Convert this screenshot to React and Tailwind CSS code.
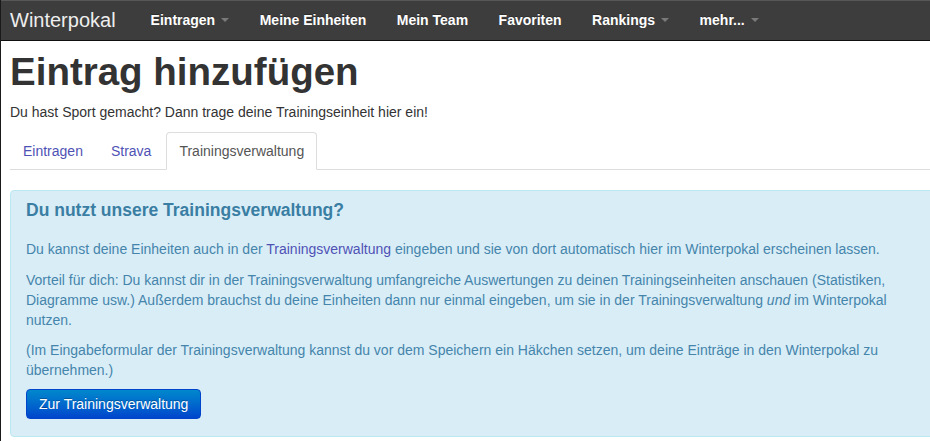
import React from 'react';

const navItems = [
  { label: 'Eintragen', caret: true },
  { label: 'Meine Einheiten' },
  { label: 'Mein Team' },
  { label: 'Favoriten' },
  { label: 'Rankings', caret: true },
  { label: 'mehr...', caret: true },
];

function Caret() {
  return (
    <span className="inline-block w-0 h-0 ml-[6px] mt-[8px] align-top border-t-4 border-x-4 border-x-transparent border-t-[#7a7a7a]" />
  );
}

function Navbar() {
  return (
    <nav className="h-[41px] bg-[#3d3d3d] border-t border-t-[#575757] border-b border-b-[#0f0f0f] flex">
      <a href="#" className="pl-[9px] pr-5 pt-[9px] text-[20px] leading-5 text-[#eeeeee]">
        Winterpokal
      </a>
      <ul className="flex">
        {navItems.map((item) => (
          <li key={item.label}>
            <a
              href="#"
              className="flex pl-[15px] pr-[15.5px] pt-[9px] pb-[10px] leading-5 font-bold text-white [text-shadow:0_-1px_0_rgba(0,0,0,0.25)]"
            >
              {item.label}
              {item.caret && <Caret />}
            </a>
          </li>
        ))}
      </ul>
    </nav>
  );
}

function Tabs() {
  const tabs = ['Eintragen', 'Strava', 'Trainingsverwaltung'];
  const active = 'Trainingsverwaltung';

  return (
    <ul className="flex border-b border-[#dddddd] mb-5">
      {tabs.map((tab) => (
        <li key={tab} className="-mb-px mr-[2px]">
          <a
            href="#"
            className={`block px-3 py-2 leading-5 border rounded-t-[4px] ${
              tab === active
                ? 'bg-white text-[#555555] border-[#dddddd] border-b-transparent'
                : 'text-[#4f52b5] border-transparent'
            }`}
          >
            {tab}
          </a>
        </li>
      ))}
    </ul>
  );
}

export default function App() {
  return (
    <div className="w-[930px] h-[441px] overflow-hidden bg-white border-l border-[#1a1a1a] font-['Liberation_Sans',Arial,sans-serif] text-[14px] leading-5 text-[#333333]">
      <Navbar />

      <div className="pl-[9px]">
        <h1 className="mt-[11px] text-[38.5px] leading-10 font-bold text-[#333333]">
          Eintrag hinzufügen
        </h1>
        <p className="mt-[10px] mb-[10px]">
          Du hast Sport gemacht? Dann trage deine Trainingseinheit hier ein!
        </p>

        <Tabs />

        <div className="w-[950px] border border-[#bce8f1] bg-[#d9edf7] rounded-[4px] text-[#4585ab] pt-[9px] pl-[15px] pr-[35px] pb-[17px]">
          <h4 className="text-[17.5px] leading-5 font-bold text-[#3a7ea3]">
            Du nutzt unsere Trainingsverwaltung?
          </h4>
          <p className="mt-[19px]">
            Du kannst deine Einheiten auch in der{' '}
            <a href="#" className="text-[#4f52b5]">Trainingsverwaltung</a>{' '}
            eingeben und sie von dort automatisch hier im Winterpokal erscheinen lassen.
          </p>
          <p className="mt-[11px]">
            Vorteil für dich: Du kannst dir in der Trainingsverwaltung umfangreiche Auswertungen zu
            deinen Trainingseinheiten anschauen (Statistiken, Diagramme usw.) Außerdem brauchst du
            deine Einheiten dann nur einmal eingeben, um sie in der Trainingsverwaltung <em>und</em> im
            Winterpokal nutzen.
          </p>
          <p className="mt-[10px]">
            (Im Eingabeformular der Trainingsverwaltung kannst du vor dem Speichern ein Häkchen
            setzen, um deine Einträge in den Winterpokal zu übernehmen.)
          </p>
          <button
            type="button"
            className="mt-[9px] px-3 py-1 leading-5 text-white rounded-[4px] border border-[#0044cc] bg-linear-to-b from-[#0088cc] to-[#0044cc] [text-shadow:0_-1px_0_rgba(0,0,0,0.25)]"
          >
            Zur Trainingsverwaltung
          </button>
        </div>
      </div>
    </div>
  );
}
